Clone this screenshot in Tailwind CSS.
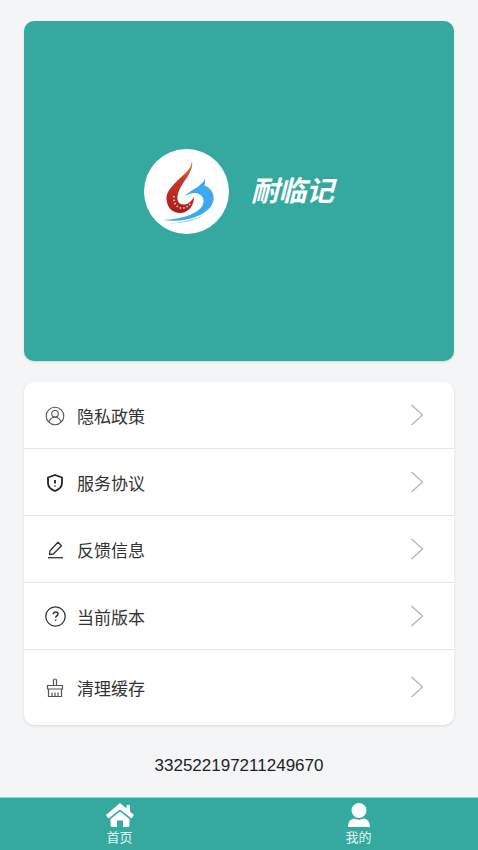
<!DOCTYPE html>
<html lang="zh-CN">
<head>
    <meta charset="UTF-8">
    <meta name="viewport" content="width=device-width, initial-scale=1.0">
    <title>我的</title>
    <script src="https://cdn.jsdelivr.net/npm/@tailwindcss/browser@4"></script>
</head>
<body class="bg-[#f4f5f7] font-['Liberation_Sans','Noto_Sans_CJK_SC',sans-serif]">
<div class="h-[850px] flex flex-col overflow-hidden">
    <div class="px-6 pt-[21px]">
        <!-- banner -->
        <div class="h-[340px] rounded-[10px] bg-[#35a9a0] shadow-sm flex items-center pl-[120px] gap-[22px]">
            <div class="w-[85px] h-[85px] rounded-full bg-white">
                <svg width="85" height="85" viewBox="0 0 85 85">
                    <defs>
                        <linearGradient id="flame" x1="0" y1="0" x2="0" y2="1">
                            <stop offset="0" stop-color="#e08a3c"/>
                            <stop offset="0.35" stop-color="#c9392a"/>
                            <stop offset="1" stop-color="#a81c1f"/>
                        </linearGradient>
                    </defs>
                    <path d="M47.700 11.700C48 20 40 25 33 32 26 39 22 44 22.500 50 23 59 29 64 36 64 44 64 50 57 50 47.700 48 52 44 55.500 39.500 55.500 35 55.500 33 52 33.500 47.500 34.500 38 43 30 46 23 48 19 49 15 47.700 11.700z" fill="url(#flame)"/>
                    <path d="M30 47c-1 6 2 11 7 12 4 .5 7-1.500 9.500-4.500" fill="none" stroke="#f0cdbd" stroke-width="1.700" stroke-dasharray="1.500 2"/>
                    <path d="M61 29.300C60 34 54 38 47 42 44 44 42 45.500 41 47 45 44.500 49 43.500 52 44 57 45 60 48.500 59.500 53 59 58.500 53 63 46 66 38 69 28 70.500 19 71 32 73 46 71 56 66 65 61.500 70.500 55 69.500 47.500 69 42 65 38 60.500 36.500 61 34 61.300 32 61 29.300z" fill="#3ea9f0"/>
                    <path d="M24 74.500c8 0 16-1 24-3 5-1.500 8-3 11-5-7 3-13 4.500-20 6-5 1-10 1.500-15 2z" fill="#8ccdf6"/>
                </svg>
            </div>
            <span class="text-white text-[28px] font-bold italic leading-none tracking-[-0.5px] pt-[2px]">耐临记</span>
        </div>

        <!-- menu -->
        <div class="mt-[21px] bg-white rounded-[10px] shadow-sm text-[17px] text-[#333]">
            <div class="h-[67px] flex items-center pl-[21px] pr-[30px] border-b border-[#e5e5e5]">
                <svg class="w-5 h-5 mt-0.5 text-[#555]" viewBox="0 0 20 20" fill="none" stroke="currentColor" stroke-width="1.1">
                    <circle cx="10" cy="10" r="8.800"/>
                    <circle cx="10" cy="7.800" r="3.300"/>
                    <path d="M4 16c1-3 3.500-4.700 6-4.700s5 1.700 6 4.700"/>
                </svg>
                <span class="ml-3 pt-1.5">隐私政策</span>
                <svg class="ml-auto w-[14px] h-[22px] mb-px text-[#b5b5b5]" viewBox="0 0 14 22" fill="none" stroke="currentColor" stroke-width="1.3"><path d="M1.500 1l11 10-11 10"/></svg>
            </div>
            <div class="h-[67px] flex items-center pl-[21px] pr-[30px] border-b border-[#e5e5e5]">
                <svg class="w-5 h-5 mt-0.5 text-[#222]" viewBox="0 0 20 20" fill="none" stroke="currentColor" stroke-width="1.800">
                    <path d="M10 2l7 2.500v5.500c0 3.800-3 6.600-7 8-4-1.400-7-4.200-7-8V4.500z" stroke-linejoin="round"/>
                    <path d="M10 7v3.500M10 12.500v1" stroke-width="1.800"/>
                </svg>
                <span class="ml-3 pt-1.5">服务协议</span>
                <svg class="ml-auto w-[14px] h-[22px] mb-px text-[#b5b5b5]" viewBox="0 0 14 22" fill="none" stroke="currentColor" stroke-width="1.3"><path d="M1.500 1l11 10-11 10"/></svg>
            </div>
            <div class="h-[67px] flex items-center pl-[21px] pr-[30px] border-b border-[#e5e5e5]">
                <svg class="w-5 h-5 text-[#333]" viewBox="0 0 20 20" fill="none" stroke="currentColor" stroke-width="1.300">
                    <path d="M4.500 15.500l.5-3.800L13 3.300l3.500 3.400-8.200 8.300z" stroke-linejoin="round"/>
                    <path d="M3 18.700h15"/>
                </svg>
                <span class="ml-3 pt-1.5">反馈信息</span>
                <svg class="ml-auto w-[14px] h-[22px] mb-px text-[#b5b5b5]" viewBox="0 0 14 22" fill="none" stroke="currentColor" stroke-width="1.3"><path d="M1.500 1l11 10-11 10"/></svg>
            </div>
            <div class="h-[67px] flex items-center pl-[21px] pr-[30px] border-b border-[#e5e5e5]">
                <svg class="w-[21px] h-[21px] text-[#333]" viewBox="0 0 21 21" fill="none" stroke="currentColor" stroke-width="1.300">
                    <circle cx="10.500" cy="10.500" r="9.700"/>
                    <path d="M8.200 8.300c0-1.400 1-2.300 2.400-2.300s2.400.9 2.400 2.100c0 1.700-2.400 1.900-2.400 3.700" stroke-width="1.500"/>
                    <path d="M10.600 13.500v1.400" stroke-width="1.500"/>
                </svg>
                <span class="ml-[11px] pt-1.5">当前版本</span>
                <svg class="ml-auto w-[14px] h-[22px] mb-px text-[#b5b5b5]" viewBox="0 0 14 22" fill="none" stroke="currentColor" stroke-width="1.3"><path d="M1.500 1l11 10-11 10"/></svg>
            </div>
            <div class="h-[75px] flex items-center pl-[21px] pr-[30px]">
                <svg class="w-5 h-5 text-[#555]" viewBox="0 0 20 20" fill="none" stroke="currentColor" stroke-width="1.200">
                    <path d="M8.500 7.500V2.300c0-.8.600-1.300 1.500-1.300s1.500.5 1.500 1.300v5.200"/>
                    <path d="M2.500 7.500h15v3.500h-15zM3.500 11v7.500h13V11"/>
                    <path d="M7 14.500v4M10 14.500v4M13 14.500v4"/>
                </svg>
                <span class="ml-3 pt-1">清理缓存</span>
                <svg class="ml-auto w-[14px] h-[22px] mb-0.5 text-[#b5b5b5]" viewBox="0 0 14 22" fill="none" stroke="currentColor" stroke-width="1.3"><path d="M1.500 1l11 10-11 10"/></svg>
            </div>
        </div>

        <div class="mt-[31px] text-center text-[17px] leading-5 text-[#222]">332522197211249670</div>
    </div>

    <!-- tab bar -->
    <div class="mt-auto h-[53px] bg-[#35a9a0] border-t border-[#8fd6cf] flex text-white text-[13px]">
        <div class="w-1/2 flex flex-col items-center pt-[5px]">
            <svg class="w-7 h-6" viewBox="0 0 28 24" fill="currentColor">
                <path d="M14 0L0 12l2.500 3.500L14 6.500l11.500 9L28 12l-4-3.500V2h-3.500v3.500z"/>
                <path d="M4.500 16L14 8.500l9.500 7.500v6c0 1-.6 2-1.600 2H17v-6.500h-6V24H6.100c-1 0-1.600-1-1.600-2z"/>
            </svg>
            <span class="mt-1 leading-[14px] text-[#e3f6f3]">首页</span>
        </div>
        <div class="w-1/2 flex flex-col items-center pt-[5px]">
            <svg class="w-[22px] h-6" viewBox="0 0 22 24" fill="currentColor">
                <circle cx="11" cy="7.500" r="7.500"/>
                <path d="M0 24c0-4 1.500-7.500 6-8.500 3 1.500 7 1.500 10 0 4.500 1 6 4.500 6 8.500z"/>
            </svg>
            <span class="mt-1 leading-[14px] text-[#e3f6f3]">我的</span>
        </div>
    </div>
</div>
</body>
</html>
